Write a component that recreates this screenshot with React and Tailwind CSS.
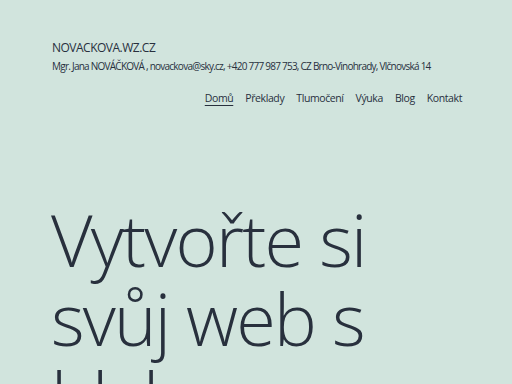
import React from "react";

const NAV = ["Domů", "Překlady", "Tlumočení", "Výuka", "Blog", "Kontakt"];

export default function App() {
  return (
    <div
      className="min-h-screen h-[384px] overflow-hidden bg-[#d1e4dd] text-[#28303d]"
      style={{ fontFamily: '"Open Sans", "Noto Sans", sans-serif' }}
    >
      <header className="px-[52px] pt-[40px]">
        <div className="text-[12px] leading-[16px] tracking-[-0.5px]">NOVACKOVA.WZ.CZ</div>
        <p className="mt-[4px] whitespace-nowrap text-[10px] leading-[13px] tracking-[-0.75px]">
          Mgr. Jana NOVÁČKOVÁ , novackova@sky.cz, +420 777 987 753, CZ Brno-Vinohrady, Vlčnovská 14
        </p>
        <nav className="mt-[17px] flex justify-end gap-[12px] pr-0 mr-[-2px] text-[10.5px] leading-[16px] tracking-[-0.4px]">
          {NAV.map((item, i) => (
            <a
              key={item}
              href="#"
              className={i === 0 ? "underline underline-offset-[3px] decoration-1" : ""}
            >
              {item}
            </a>
          ))}
        </nav>
      </header>

      <main className="px-[51px] pt-[94px]">
        <h1 className="text-[72px] leading-[79px] font-light tracking-[-1.8px]">
          Vytvořte si svůj web s blahem
        </h1>
      </main>
    </div>
  );
}
